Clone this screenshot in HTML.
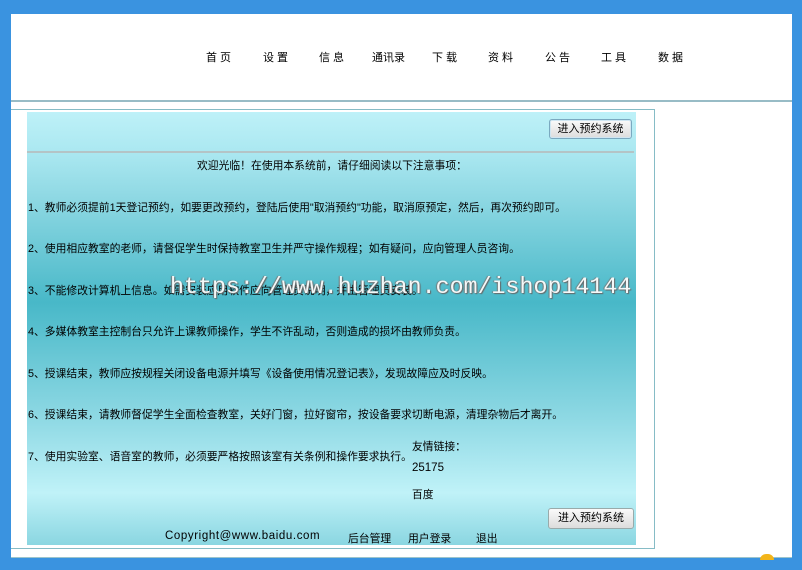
<!DOCTYPE html>
<html><head><meta charset="utf-8"><style>
*{margin:0;padding:0;box-sizing:border-box}
body{width:802px;height:570px;background:#3a93e0;position:relative;overflow:hidden;font-family:"Liberation Sans","Noto Sans CJK SC",sans-serif;color:#000}
.abs{position:absolute;white-space:nowrap}
#white{left:11px;top:14px;width:781px;height:544px;background:#fff;border-bottom:1px solid #9cc4cc}
#hline{left:11px;top:100px;width:781px;height:2px;background:#98bcc6}
.nav{top:49px;font-size:11px;letter-spacing:3px}
#box{left:11px;top:109px;width:644px;height:440px;border:1px solid #86bcc6;border-left:none}
#panel{left:27px;top:112px;width:609px;height:433px;background:linear-gradient(#bef1f8 0%,#a9e7f0 10%,#8ed8e3 20%,#48b8c8 44%,#8fd9e4 71%,#c0f2f8 88%,#8ad6e1 100%)}
#sep{left:27px;top:151px;width:607px;height:2px;background:#b4c4c6}
.btn{font-size:11px;border:1px solid #7aa9c0;border-radius:3px;background:linear-gradient(#fafafa,#dcdcdc);text-align:center;line-height:18px;box-shadow:inset 0 0 0 1px #cfe6f2}
.t{font-size:10.8px;left:28px}
#wm{left:170px;top:274px;font-family:"Liberation Mono",monospace;font-size:23.3px;color:#f4f8f8;text-shadow:1px 1px 1px #666,-1px 0 1px #777}
</style></head><body>
<div class="abs" id="white"></div>
<div class="abs" id="hline"></div>
<div class="abs nav" style="left:206px">首页</div>
<div class="abs nav" style="left:263px">设置</div>
<div class="abs nav" style="left:319px">信息</div>
<div class="abs nav" style="left:372px;letter-spacing:0">通讯录</div>
<div class="abs nav" style="left:432px">下载</div>
<div class="abs nav" style="left:488px">资料</div>
<div class="abs nav" style="left:545px">公告</div>
<div class="abs nav" style="left:601px">工具</div>
<div class="abs nav" style="left:658px">数据</div>
<div class="abs" id="box"></div>
<div class="abs" id="panel"></div>
<div class="abs" id="sep"></div>
<div class="abs btn" style="left:549px;top:119px;width:83px;height:20px">进入预约系统</div>
<div class="abs t" style="left:197px;top:157px">欢迎光临！在使用本系统前，请仔细阅读以下注意事项：</div>
<div class="abs t" style="top:199px">1、教师必须提前1天登记预约，如要更改预约，登陆后使用"取消预约"功能，取消原预定，然后，再次预约即可。</div>
<div class="abs t" style="top:240px">2、使用相应教室的老师，请督促学生时保持教室卫生并严守操作规程；如有疑问，应向管理人员咨询。</div>
<div class="abs t" style="top:282px">3、不能修改计算机上信息。如需安装应用软件应向管理员说明，并由管理员安装。</div>
<div class="abs t" style="top:323px">4、多媒体教室主控制台只允许上课教师操作，学生不许乱动，否则造成的损坏由教师负责。</div>
<div class="abs t" style="top:365px">5、授课结束，教师应按规程关闭设备电源并填写《设备使用情况登记表》，发现故障应及时反映。</div>
<div class="abs t" style="top:406px">6、授课结束，请教师督促学生全面检查教室，关好门窗，拉好窗帘，按设备要求切断电源，清理杂物后才离开。</div>
<div class="abs t" style="top:448px">7、使用实验室、语音室的教师，必须要严格按照该室有关条例和操作要求执行。</div>
<div class="abs t" style="left:412px;top:438px">友情链接：</div>
<div class="abs t" style="left:412px;top:462px;font-size:11.5px">25175</div>
<div class="abs t" style="left:412px;top:486px">百度</div>
<div class="abs btn" style="left:548px;top:508px;width:86px;height:21px;border-color:#9aa;box-shadow:none">进入预约系统</div>
<div class="abs t" style="left:165px;top:530px;font-size:11.5px;letter-spacing:0.6px">Copyright@www.baidu.com</div>
<div class="abs t" style="left:348px;top:530px">后台管理</div>
<div class="abs t" style="left:408px;top:530px">用户登录</div>
<div class="abs t" style="left:476px;top:530px">退出</div>
<div class="abs" id="wm">https://www.huzhan.com/ishop14144</div>
<div class="abs" style="left:760px;top:554px;width:14px;height:6px;background:#f3b51a;border-radius:6px 6px 0 0"></div>
</body></html>
